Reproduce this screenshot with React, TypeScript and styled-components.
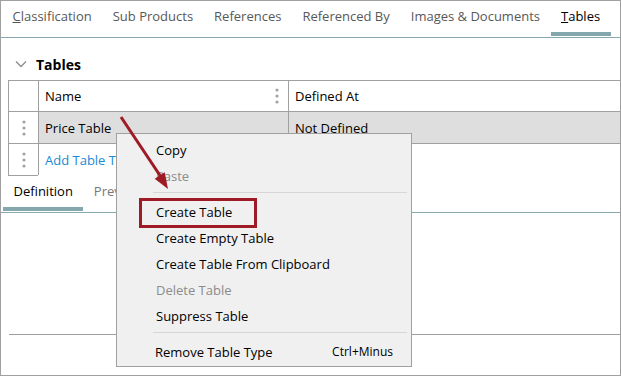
import React from 'react';
import styled, { createGlobalStyle } from 'styled-components';

const GlobalStyle = createGlobalStyle`
	body {
		margin: 0;
		background: #fff;
		font-family: "Open Sans", "Liberation Sans", sans-serif;
	}
`;

const Frame = styled.div`
	position: relative;
	display: flex;
	flex-direction: column;
	width: 621px;
	height: 376px;
	box-sizing: border-box;
	border: 1px solid #a0a0a0;
	overflow: hidden;
	background: #fff;
	font-size: 13px;
	color: #000;
`;

const TabBar = styled.div`
	display: flex;
	flex-shrink: 0;
	height: 36px;
	padding-left: 1px;
	border-bottom: 1px solid #8aa8b0;
`;

const Tab = styled.div<{ $active?: boolean; $muted?: boolean }>`
	position: relative;
	padding: 6px 10.5px 0;
	line-height: 18px;
	white-space: nowrap;
	color: ${(p) => (p.$active ? '#000' : p.$muted ? '#777' : '#585858')};

	&::after {
		content: '';
		display: ${(p) => (p.$active ? 'block' : 'none')};
		position: absolute;
		left: 0;
		right: 0;
		bottom: 1px;
		height: 4px;
		background: #84a7ae;
	}
`;

const SectionHeader = styled.div`
	display: flex;
	align-items: center;
	gap: 9px;
	height: 32px;
	padding: 10px 0 0 14px;
	box-sizing: border-box;
	height: 42px;
	font-size: 14px;
	font-weight: 700;
`;

const Grid = styled.div`
	display: grid;
	grid-template-columns: 30px 250px 1fr;
	margin-left: 7px;
`;

const Cell = styled.div<{ $shaded?: boolean; $open?: boolean; $bottom?: boolean; $height: number }>`
	display: flex;
	align-items: center;
	justify-content: space-between;
	height: ${(p) => p.$height}px;
	padding: 0 9px 0 6px;
	border-top: 1px solid #a0a0a0;
	border-left: ${(p) => (p.$open ? 'none' : '1px solid #a0a0a0')};
	border-bottom: ${(p) => (p.$bottom ? '1px solid #a0a0a0' : 'none')};
	background: ${(p) => (p.$shaded ? '#dedede' : '#fff')};
	white-space: nowrap;
`;

const HandleCell = styled(Cell)`
	justify-content: center;
	padding: 0;
`;

const Link = styled.span`
	color: #1a8ad4;
`;

const SubTabBar = styled(TabBar)`
	height: 36px;
	padding-left: 2px;
`;

const Pane = styled.div`
	height: 121px;
	flex-shrink: 0;
`;

const Footer = styled.div`
	flex: 1;
	margin-left: 8px;
	border-top: 1px solid #a0a0a0;
`;

const Menu = styled.div`
	position: absolute;
	left: 115px;
	top: 132px;
	width: 296px;
	box-sizing: border-box;
	padding: 3px 0 1px;
	border: 1px solid #a0a0a0;
	background: #f0f0f0;
`;

const MenuItem = styled.div<{ $disabled?: boolean; $indent?: number }>`
	display: flex;
	align-items: center;
	justify-content: space-between;
	height: 26px;
	padding: 0 18px 0 ${(p) => p.$indent ?? 39}px;
	line-height: 18px;
	color: ${(p) => (p.$disabled ? '#8c8c8c' : '#000')};
`;

const Shortcut = styled.span`
	font-size: 12px;
`;

const Separator = styled.div`
	height: 1px;
	margin: 3px 4px 6px 36px;
	background: #d6d6d6;
`;

const Callout = styled.div`
	position: absolute;
	left: 138px;
	top: 197px;
	width: 118px;
	height: 30px;
	box-sizing: border-box;
	border: 3px solid #9e1b26;
`;

const ArrowLayer = styled.svg`
	position: absolute;
	left: -1px;
	top: -1px;
	pointer-events: none;
`;

function Dots() {
	return (
		<svg width="4" height="16" viewBox="0 0 4 16">
			<circle cx="2" cy="2" r="1.6" fill="#a3a3a3" />
			<circle cx="2" cy="8" r="1.6" fill="#a3a3a3" />
			<circle cx="2" cy="14" r="1.6" fill="#a3a3a3" />
		</svg>
	);
}

function Chevron() {
	return (
		<svg width="12" height="8" viewBox="0 0 12 8">
			<polyline points="1,1.5 6,6.5 11,1.5" fill="none" stroke="#8c8c8c" strokeWidth="1.3" />
		</svg>
	);
}

const tabs = ['Classification', 'Sub Products', 'References', 'Referenced By', 'Images & Documents'];

export default function App() {
	return (
		<>
			<GlobalStyle />
			<Frame>
				<TabBar>
					{tabs.map((t, i) => (
						<Tab key={t}>
							{i === 0 ? (
								<>
									<u>C</u>
									{t.slice(1)}
								</>
							) : (
								t
							)}
						</Tab>
					))}
					<Tab $active>
						<u>T</u>ables
					</Tab>
				</TabBar>

				<SectionHeader>
					<Chevron />
					Tables
				</SectionHeader>

				<Grid>
					<HandleCell $height={30} />
					<Cell $height={30}>
						Name
						<Dots />
					</Cell>
					<Cell $height={30}>Defined At</Cell>

					<HandleCell $height={31}>
						<Dots />
					</HandleCell>
					<Cell $height={31} $shaded>
						Price Table
					</Cell>
					<Cell $height={31} $shaded>
						Not Defined
					</Cell>

					<HandleCell $height={31} $bottom>
						<Dots />
					</HandleCell>
					<Cell $height={31}>
						<Link>Add Table Type</Link>
					</Cell>
					<Cell $height={31} $open />
				</Grid>

				<SubTabBar>
					<Tab $active style={{ color: '#000' }}>
						Definition
					</Tab>
					<Tab $muted>Preview</Tab>
				</SubTabBar>
				<Pane />
				<Footer />

				<Menu>
					<MenuItem>Copy</MenuItem>
					<MenuItem $disabled>Paste</MenuItem>
					<Separator />
					<MenuItem>Create Table</MenuItem>
					<MenuItem>Create Empty Table</MenuItem>
					<MenuItem>Create Table From Clipboard</MenuItem>
					<MenuItem $disabled>Delete Table</MenuItem>
					<MenuItem>Suppress Table</MenuItem>
					<Separator />
					<MenuItem $indent={38}>
						Remove Table Type
						<Shortcut>Ctrl+Minus</Shortcut>
					</MenuItem>
				</Menu>

				<Callout />

				<ArrowLayer width="621" height="376" viewBox="0 0 621 376">
					<line x1="121" y1="117" x2="161" y2="177" stroke="#9e1b26" strokeWidth="3" />
					<polygon points="168,189 154.7,178.8 164.7,172.2" fill="#9e1b26" />
				</ArrowLayer>
			</Frame>
		</>
	);
}
